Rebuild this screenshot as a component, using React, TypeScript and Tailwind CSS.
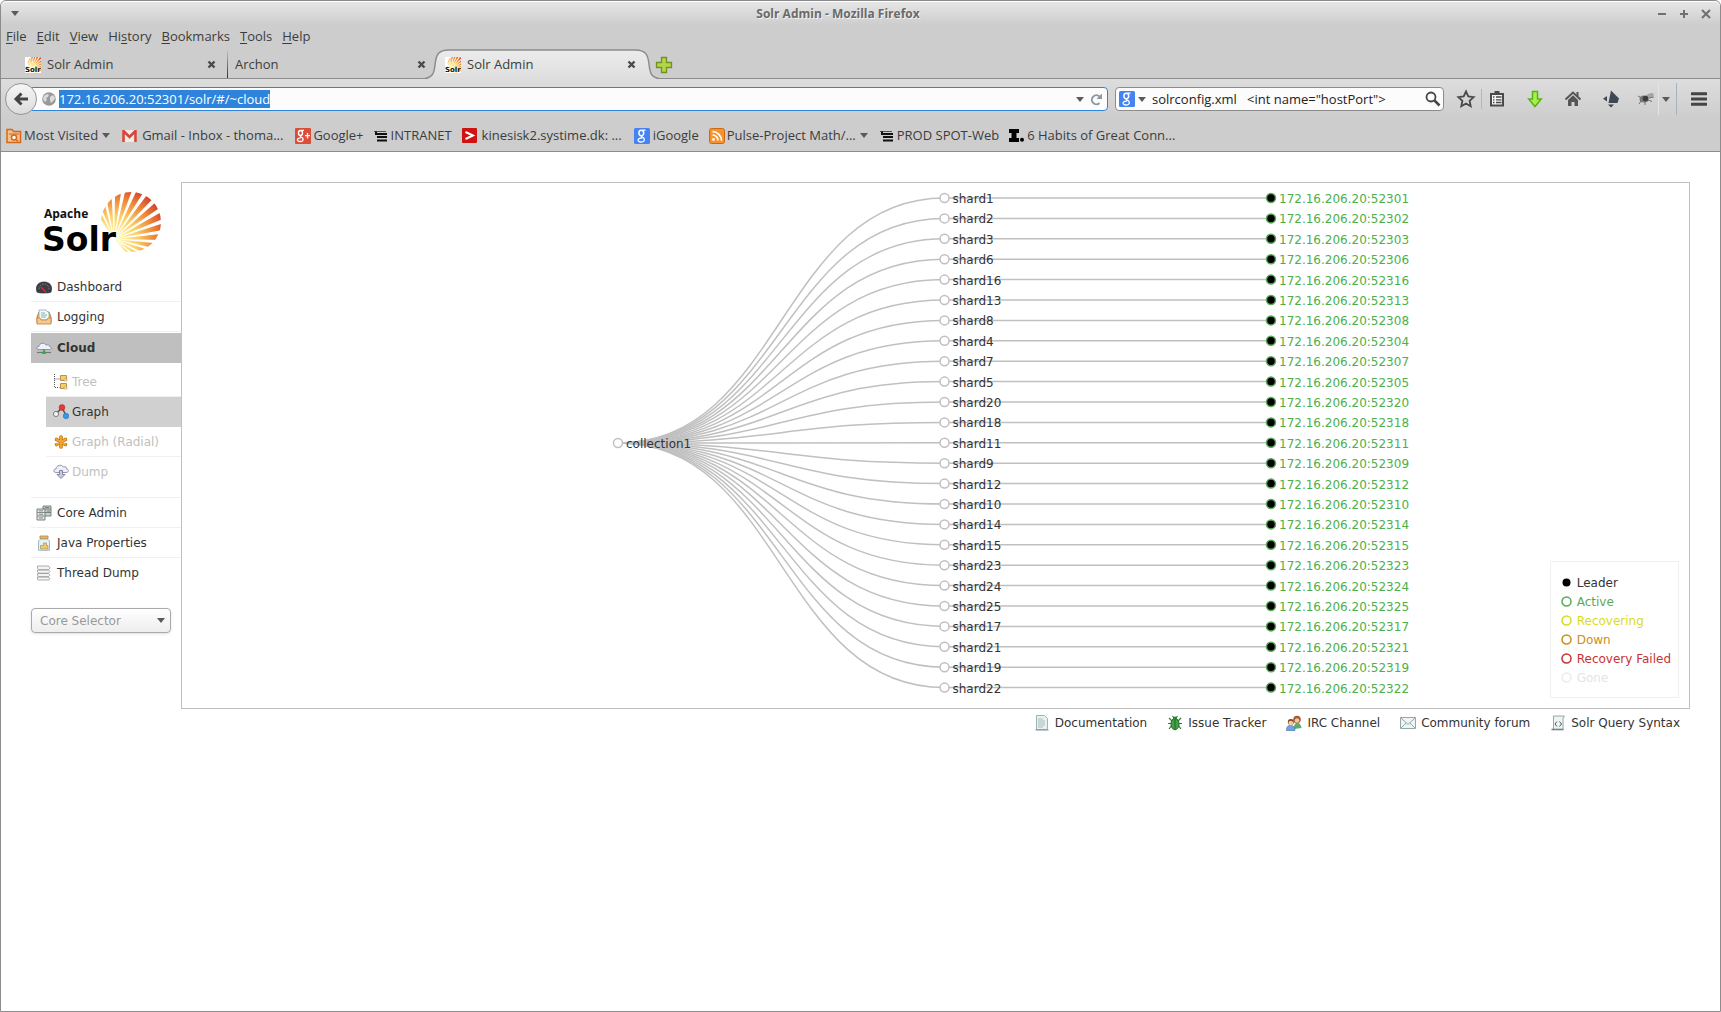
import React, { useEffect, useRef } from "react";

const shards = [1, 2, 3, 6, 16, 13, 8, 4, 7, 5, 20, 18, 11, 9, 12, 10, 14, 15, 23, 24, 25, 17, 21, 19, 22];

function Caret({ className = "" }: { className?: string }) {
  return (
    <svg className={"shrink-0 " + className} width="8" height="5" viewBox="0 0 8 5">
      <path d="M0 0h8L4 5z" fill="#5a5a5a" />
    </svg>
  );
}

function Burst({ x, y, scale = 1 }: { x: number; y: number; scale?: number }) {
  const rays = Array.from({ length: 15 }, (_, i) => {
    const a = ((-124 + i * 11.8) * Math.PI) / 180;
    const b = ((-124 + i * 11.8 + 7.2) * Math.PI) / 180;
    return `M0 0L${70 * Math.cos(a)} ${70 * Math.sin(a)}L${70 * Math.cos(b)} ${70 * Math.sin(b)}z`;
  }).join("");
  return (
    <g transform={`translate(${x} ${y}) scale(${scale})`}>
      <defs>
        <radialGradient id="burst" gradientUnits="userSpaceOnUse" cx="0" cy="0" r="58">
          <stop offset="0.1" stopColor="#fff6b0" />
          <stop offset="0.4" stopColor="#fbd067" />
          <stop offset="0.7" stopColor="#ee8537" />
          <stop offset="1" stopColor="#c9302c" />
        </radialGradient>
        <clipPath id="disc">
          <circle cx="17" cy="-17" r="30" />
        </clipPath>
      </defs>
      <path d={rays} fill="url(#burst)" clipPath="url(#disc)" />
    </g>
  );
}

function SolrLogo() {
  return (
    <svg width="124" height="74" viewBox="0 0 124 74" role="img" aria-label="Apache Solr">
      <Burst x={73} y={49} />
      <text x="3" y="28" fontFamily="Open Sans" fontWeight="700" fontSize="12" fill="#111">Apache</text>
      <text x="1" y="61" fontFamily="DejaVu Sans" fontWeight="700" fontSize="33" fill="#000" stroke="#fff" strokeWidth="2" paintOrder="stroke">Solr</text>
    </svg>
  );
}

function SolrFavicon() {
  return (
    <svg className="shrink-0" width="16" height="16" viewBox="0 0 16 16">
      <rect width="16" height="16" fill="#fff" />
      <Burst x={6} y={12} scale={0.28} />
      <text x="0" y="15" fontFamily="DejaVu Sans" fontWeight="700" fontSize="7" fill="#111">Solr</text>
    </svg>
  );
}

function CloseMark() {
  return (
    <svg width="9" height="9" viewBox="0 0 9 9">
      <path d="M1.5 1.5l6 6M7.5 1.5l-6 6" stroke="#4a4a4a" strokeWidth="2.4" />
    </svg>
  );
}

function GoogleG() {
  return (
    <svg className="shrink-0" width="16" height="16" viewBox="0 0 16 16">
      <rect width="16" height="16" rx="1.5" fill="#4583f3" />
      <ellipse cx="7.300" cy="5" rx="2.400" ry="2.700" fill="none" stroke="#fff" strokeWidth="1.500" />
      <path d="M8.500 2.200h3M8 7.700c-2 1.200 1 1.600 1.900 2.600 1.400 2-.3 3.700-2.600 3.700-2.600 0-3.700-1.300-3-2.600.6-1.100 2-1.400 3.500-1.400" fill="none" stroke="#fff" strokeWidth="1.300" />
    </svg>
  );
}

function SpotIcon() {
  return (
    <svg className="shrink-0" width="14" height="12" viewBox="0 0 14 12">
      <path d="M0 1.5h12" stroke="#555" strokeWidth="1" />
      <path d="M2 1.5v2.5h11M3 7h10M3 10.5h10" stroke="#111" strokeWidth="2" fill="none" />
    </svg>
  );
}

const sideIcons: Record<string, React.ReactNode> = {
  dashboard: (
    <g>
      <path d="M1 13C-1 6 3 3 8 3s9 3 7 10q-1 1-7 1t-7-1z" fill="#3d3d44" stroke="#26262b" strokeWidth=".7" />
      <path d="M3 10a5 5 0 0 1 10 0" fill="none" stroke="#8b8b92" strokeWidth="1" strokeDasharray="1.5 1.3" />
      <path d="M5 8l5 5.500" stroke="#e3263a" strokeWidth="1.3" />
    </g>
  ),
  logging: (
    <g>
      <path d="M1 8l2-5h10l2 5v6H1z" fill="#e9b06b" stroke="#c0803c" />
      <path d="M3 1h7l3 3v7H3z" fill="#f1f8f8" stroke="#8ca9ab" strokeWidth=".8" />
      <path d="M5 4h4M5 6h6M5 8h5" stroke="#8bb1b5" />
      <path d="M1 9h3l1 2h6l1-2h3v6H1z" fill="#f5c98f" stroke="#c0803c" strokeWidth=".8" />
    </g>
  ),
  cloud: (
    <g>
      <path d="M3 9.500C0 9.500 0 6.500 3 6.500c0-3.500 5.500-4.500 7-1.500 2.500-.5 3.500 0 3.500 1.500 2.500 0 2.500 3 0 3z" fill="#f0f0fa" stroke="#8585a6" strokeWidth=".9" />
      <path d="M1 12.500h14" stroke="#777" strokeWidth="1.200" />
      <path d="M8 9.500v3" stroke="#2b9a36" strokeWidth="1.500" />
      <rect x="6" y="11.500" width="4" height="2.500" rx="1" fill="#31ab3f" />
    </g>
  ),
  tree: (
    <g>
      <path d="M1.500 0v13.500h5M1.500 5h5" stroke="#555" strokeDasharray="1 1" fill="none" />
      <path d="M7.500 1.500h6v5h-6zM7.500 9.500h6v5h-6z" fill="#f0ce72" stroke="#b8924a" />
      <path d="M11 5h3v2h-3zM11 13h3v2h-3z" fill="#fff3c4" stroke="#b8924a" strokeWidth=".6" />
    </g>
  ),
  graph: (
    <g>
      <path d="M3 10L9 3.500l4 8" stroke="#555" strokeWidth="1.500" fill="none" />
      <circle cx="9" cy="3.500" r="2.900" fill="#e33b3b" stroke="#a82020" strokeWidth=".5" />
      <circle cx="3" cy="10" r="2.600" fill="#f1f1f1" stroke="#666" strokeWidth=".8" />
      <circle cx="13" cy="12" r="2.800" fill="#3a97e6" stroke="#1d69b1" strokeWidth=".5" />
    </g>
  ),
  radial: (
    <g strokeLinecap="round">
      <path d="M8 3v10M3.500 5.500l9 5M12.500 5.500l-9 5" stroke="#b8720c" strokeWidth="3.600" />
      <path d="M8 3v10M3.500 5.500l9 5M12.500 5.500l-9 5" stroke="#f2a52c" strokeWidth="2.200" />
    </g>
  ),
  dump: (
    <g>
      <path d="M3 8.500C0 8.500 0 5 3 5c0-4 6-5 7.500-2C13 2 14 4 13.500 5c2.500 0 2.500 3.500 0 3.500z" fill="#eeeef9" stroke="#8c8ca8" strokeWidth=".9" />
      <path d="M6.500 6.500h3v4H12l-4 4-4-4h2.500z" fill="#c9c9e0" stroke="#7c7c98" strokeWidth=".9" />
    </g>
  ),
  core: (
    <g>
      <path d="M7 1h8v10H7z" fill="#c9d0c9" stroke="#6f7674" strokeWidth=".9" />
      <path d="M7 4h8M7 7.500h8M9 2.500h4M11 6h3" stroke="#78807c" />
      <path d="M1 4h8v11H1z" fill="#dfe4df" stroke="#6f7674" strokeWidth=".9" />
      <path d="M1 7.500h8M1 11h8M3 5.800h4M3 9.300h4M3 13h4" stroke="#848d88" />
    </g>
  ),
  java: (
    <g>
      <path d="M4 1h8v2.500H4z" fill="#e9b95a" stroke="#bd8728" strokeWidth=".8" />
      <path d="M4.500 4h7l2 2v9.300h-11V6z" fill="#e6f1f7" stroke="#8fb0c2" strokeWidth=".9" />
      <path d="M4.500 10.500h3V8h3v2.500h1.500v3.500H4.500z" fill="#eac77a" stroke="#b98f3f" strokeWidth=".7" />
    </g>
  ),
  thread: (
    <g fill="#f4f4f4" stroke="#999" strokeWidth=".8">
      <path d="M1 12h11l2 1.500-1 1.500H2.500L1 14l1-1zM1.500 8.500h11l1.500 1.700-1.500 1.500H3L1.500 10.500zM1.500 5h11L14 6.700l-1.500 1.500H3L1.500 7zM1.500 1h11L14 3l-1.500 1.700H3L1.500 3.500z" />
    </g>
  ),
  doc: (
    <g>
      <path d="M2.500.5h8l3 3v11h-11z" fill="#eaf1f1" stroke="#9db3b3" />
      <path d="M4 4h5M4 6h7M4 8h7M4 10h7M4 12h5" stroke="#a3bcbc" />
      <path d="M1.500 15h13" stroke="#7d9292" />
    </g>
  ),
  bug: (
    <g>
      <path d="M2 3l3 3M14 3l-3 3M1 8.500h14M2 14l3-4M14 14l-3-4M5.500 1l1.500 2M10.500 1L9 3" stroke="#2e7d32" strokeWidth="1.200" />
      <ellipse cx="8" cy="9" rx="4" ry="5.800" fill="#45a047" stroke="#25692a" />
      <path d="M8 5v9" stroke="#25692a" />
      <circle cx="8" cy="3.500" r="2" fill="#2f8033" />
    </g>
  ),
  people: (
    <g>
      <path d="M8 14c0-5 1-6 3.500-6S15 10 15.500 13z" fill="#56ad72" />
      <circle cx="11" cy="4.500" r="3.800" fill="#a95a33" />
      <circle cx="11" cy="5.500" r="2.300" fill="#f2c79d" />
      <path d="M.5 15.500c0-4 1.500-5 4-5s4.500 1 4.500 5z" fill="#6fa4e0" stroke="#38699f" strokeWidth=".6" />
      <circle cx="4.800" cy="7" r="3" fill="#7b4425" />
      <circle cx="4.800" cy="8" r="2.300" fill="#f6cfa6" />
    </g>
  ),
  mail: (
    <g>
      <path d="M.5 2.500h15v11H.5z" fill="#eef3f3" stroke="#93a8a8" />
      <path d="M1 3l7 6.500L15 3M1 13l5-5M15 13l-5-5" fill="none" stroke="#93a8a8" />
    </g>
  ),
  script: (
    <g>
      <path d="M3.500 1h11l-1.500 2v11.500H3.500z" fill="#eef3f3" stroke="#93a8a8" />
      <path d="M1.500 14.500h12" stroke="#708787" strokeWidth="1.600" />
      <path d="M7 6.500L5 9l2 2.500M9.500 6.500l2 2.500-2 2.500" fill="none" stroke="#555" />
    </g>
  ),
};

function Icon({ name }: { name: string }) {
  return (
    <svg className="shrink-0" width="16" height="16" viewBox="0 0 16 16">
      {sideIcons[name]}
    </svg>
  );
}

const menus: [string, string, string][] = [
  ["", "F", "ile"], ["", "E", "dit"], ["", "V", "iew"], ["Hi", "s", "tory"], ["", "B", "ookmarks"], ["", "T", "ools"], ["", "H", "elp"],
];

const bookmarks: { label: string; icon: React.ReactNode; caret?: boolean; gap: string }[] = [
  {
    label: "Most Visited", caret: true, gap: "mr-3 gap-0.5",
    icon: (
      <svg className="shrink-0" width="16" height="16" viewBox="0 0 16 16">
        <path d="M1 14.500V1.500h5l1.500 2H14.500v11z" fill="#f5c08a" stroke="#d2691e" strokeWidth="1.500" />
        <path d="M3 6h10" stroke="#d2691e" />
        <circle cx="8" cy="9.500" r="2.500" fill="#fff" stroke="#d2691e" strokeWidth="1.500" />
        <path d="M10 11.500l2 2" stroke="#d2691e" strokeWidth="1.500" />
      </svg>
    ),
  },
  {
    label: "Gmail - Inbox - thoma...", gap: "mr-3 gap-[5px]",
    icon: (
      <svg className="shrink-0" width="15" height="12" viewBox="0 0 15 12">
        <path d="M0 0h15v12H0z" fill="#f0eadf" />
        <path d="M1.500 12V1L7.500 7l6-6v11" fill="none" stroke="#d6453d" strokeWidth="2.600" />
      </svg>
    ),
  },
  {
    label: "Google+", gap: "mr-2.5 gap-0.5",
    icon: (
      <svg className="shrink-0" width="16" height="16" viewBox="0 0 16 16">
        <rect width="16" height="16" rx="1" fill="#dd4b39" />
        <ellipse cx="5.500" cy="5" rx="2" ry="2.500" fill="none" stroke="#fff" strokeWidth="1.400" />
        <path d="M6.500 2.400h2.500M6 7.500c-2 1.200 1 1.600 1.700 2.600 1.200 2-.3 3.400-2.400 3.400-2.400 0-3.300-1.200-2.700-2.400.6-1 1.800-1.300 3.200-1.300M12.500 5v5.500M10 7.700h5" fill="none" stroke="#fff" strokeWidth="1.300" />
      </svg>
    ),
  },
  { label: "INTRANET", gap: "mr-2.5 gap-[3px]", icon: <SpotIcon /> },
  {
    label: "kinesisk2.systime.dk: ...", gap: "mr-3 gap-[5px]",
    icon: (
      <svg className="shrink-0" width="15" height="15" viewBox="0 0 15 15">
        <rect width="15" height="15" rx="1" fill="#cf1313" />
        <path d="M3.500 4L11 7.500 3.500 11" fill="none" stroke="#fff" strokeWidth="2" />
      </svg>
    ),
  },
  { label: "iGoogle", gap: "mr-2.5 gap-[3px]", icon: <GoogleG /> },
  {
    label: "Pulse-Project Math/...", caret: true, gap: "mr-3 gap-0.5",
    icon: (
      <svg className="shrink-0" width="16" height="16" viewBox="0 0 16 16">
        <rect x=".5" y=".5" width="15" height="15" rx="2" fill="#f7922f" stroke="#c96a12" />
        <circle cx="4.500" cy="11.500" r="1.400" fill="#fff" />
        <path d="M3.500 7a5.500 5.500 0 0 1 5.500 5.500M3.500 3.700a9 9 0 0 1 9 9" fill="none" stroke="#fff" strokeWidth="1.700" />
      </svg>
    ),
  },
  { label: "PROD SPOT-Web", gap: "mr-2.5 gap-[3px]", icon: <SpotIcon /> },
  {
    label: "6 Habits of Great Conn...", gap: "gap-0.5",
    icon: (
      <svg className="shrink-0" width="16" height="13" viewBox="0 0 16 13">
        <path d="M0 0h10v4H7.500v5H10v4H0V9h2.500V4H0z" fill="#000" />
        <circle cx="13" cy="10.800" r="2" fill="#000" />
      </svg>
    ),
  },
];

const toolbar: { name: string; box: string; icon: React.ReactNode }[] = [
  {
    name: "Bookmark this page", box: "w-[31px] border-r border-[#b4b8bd]",
    icon: <path d="M10 2.500l2.300 5 5.300.6-4 3.700 1.100 5.400L10 14.500l-4.700 2.700 1.100-5.400-4-3.700 5.300-.6z" fill="none" stroke="#4a4a4a" strokeWidth="1.800" />,
  },
  {
    name: "Bookmarks list", box: "w-[30px]",
    icon: (
      <g>
        <path d="M4 5h12v11.500H4z" fill="#f5f5f5" stroke="#4a4a4a" strokeWidth="2" />
        <path d="M7.500 2h5v3h-5z" fill="#4a4a4a" />
        <path d="M6 8h1.500M9 8h5.500M6 10.800h1.500M9 10.800h5.500M6 13.500h1.500M9 13.500h5.500" stroke="#4a4a4a" strokeWidth="1.300" />
      </g>
    ),
  },
  {
    name: "Downloads", box: "w-[45px]",
    icon: <path d="M7.500 2.500h5V10h3.800L10 17.500 3.700 10h3.800z" fill="#a6f04a" stroke="#58b414" strokeWidth="1.500" />,
  },
  {
    name: "Home", box: "w-[31px]",
    icon: (
      <g>
        <path d="M2.500 10.500L10 3.500l7.500 7" fill="none" stroke="#555" strokeWidth="2" />
        <path d="M13.500 3h2v4h-2zM5 11l5-4.800 5 4.800v6h-3.500v-4h-3v4H5z" fill="#555" />
      </g>
    ),
  },
  {
    name: "Navigate", box: "w-[45px]",
    icon: (
      <g fill="#3e4852">
        <path d="M10 1.500l8 8-1.500 4.500H7.500z" />
        <path d="M6 7v5.500L2 9.700zM7 15.500h6L10 18.500z" />
      </g>
    ),
  },
  {
    name: "Fly", box: "w-[25px]",
    icon: (
      <g>
        <ellipse cx="8" cy="10" rx="4.500" ry="3.500" fill="#777" />
        <ellipse cx="14" cy="6.500" rx="4" ry="2" fill="#a6a6a6" transform="rotate(-20 14 6.500)" />
        <circle cx="9.500" cy="9.500" r="2.800" fill="#3c3c3c" />
        <path d="M4 8l-2-1M5 12l-2 3M9 13v3M12 11l4 1.500M13 9l5-1" stroke="#666" strokeWidth=".9" />
      </g>
    ),
  },
];

const legend = [
  ["Leader", "text-[#333333]", "fill-black"],
  ["Active", "text-[#57ab57]", "fill-none stroke-[#57ab57]"],
  ["Recovering", "text-[#d9dc1c]", "fill-none stroke-[#d9dc1c]"],
  ["Down", "text-[#c8901a]", "fill-none stroke-[#c8901a]"],
  ["Recovery Failed", "text-[#c83232]", "fill-none stroke-[#c83232]"],
  ["Gone", "text-[#e4e4e4]", "fill-none stroke-[#ececec]"],
];

function CloudGraph() {
  const rootX = 436, shardX = 762.5, hostX = 1089, rootY = 260;
  const mid = (rootX + shardX) / 2;
  return (
    <svg className="block h-auto w-full" viewBox="0 0 1507 525" fontFamily="DejaVu Sans, sans-serif" fontSize="12">
      {shards.map((n, i) => {
        const y = 15 + i * 20.4;
        return (
          <path key={n} d={`M${rootX} ${rootY}C${mid} ${rootY} ${mid} ${y} ${shardX} ${y}H${hostX}`} fill="none" stroke="#c0c0c0" strokeWidth="1.500" />
        );
      })}
      <circle cx={rootX} cy={rootY} r="4.500" fill="#fff" stroke="#c0c0c0" strokeWidth="1.500" />
      <text x={rootX + 8} y={rootY + 5} fill="#333">collection1</text>
      {shards.map((n, i) => {
        const y = 15 + i * 20.4;
        return (
          <g key={n}>
            <circle cx={shardX} cy={y} r="4.500" fill="#fff" stroke="#c0c0c0" strokeWidth="1.500" />
            <text x={shardX + 8} y={y + 5} fill="#333">shard{n}</text>
            <circle cx={hostX} cy={y} r="4.500" fill="#000" stroke="#57ab57" strokeWidth="1.500" />
            <text x={hostX + 8} y={y + 5} fill="#4daf4a">172.16.206.20:{52300 + n}</text>
          </g>
        );
      })}
    </svg>
  );
}

function Tab({ label, favicon, active }: { label: string; favicon?: boolean; active?: boolean }) {
  return (
    <div className={"flex w-[210px] items-center gap-1.5 pt-0.5 pr-[9px] pl-2 " + (active ? "relative" : "")}>
      {active && (
        <svg className="absolute top-0 -left-3 h-[30px] w-[234px]" viewBox="0 0 234 30">
          <defs>
            <linearGradient id="tab" x1="0" y1="0" x2="0" y2="1">
              <stop offset="0" stopColor="#ececec" />
              <stop offset="1" stopColor="#dedede" />
            </linearGradient>
          </defs>
          <path d="M0 30C8 29 9 24 10 16 11 6 13 1 24 1h186c11 0 13 5 14 14 1 9 2 14 10 15z" fill="url(#tab)" />
          <path d="M0 29.500C8 28 9 24 10 16 11 6 13 1 24 1h186c11 0 13 5 14 14 1 9 2 13 10 14.500" fill="none" stroke="#8c8c8c" strokeWidth="1.500" />
        </svg>
      )}
      {favicon && <span className="relative"><SolrFavicon /></span>}
      <span className="relative grow">{label}</span>
      <button aria-label={"Close " + label} className="relative p-0.5"><CloseMark /></button>
    </div>
  );
}

function NavItem({ icon, label, className = "", sub = false }: { icon: string; label: string; className?: string; sub?: boolean }) {
  return (
    <a href={"#" + icon} className={"flex h-[30px] items-center " + (sub ? "gap-[3px] pl-[7px] " : "gap-[5px] pl-[5px] ") + className}>
      <Icon name={icon} />
      {label}
    </a>
  );
}

export default function App() {
  const url = useRef<HTMLInputElement>(null);
  useEffect(() => {
    url.current?.focus();
    url.current?.select();
  }, []);

  return (
    <div className="flex min-h-screen flex-col rounded-t-md border border-[#8c8c8c] bg-white font-['DejaVu_Sans',sans-serif] text-[12px] text-[#333]">
      <header className="rounded-t-md bg-[#cdcdcd] font-['Open_Sans',sans-serif] text-[13px] text-[#3c3c3c]">
        <div className="flex h-[24px] items-center rounded-t-md border-t border-white bg-linear-to-b from-[#e6e6e6] to-[#cdcdcd] pr-[9px] pl-2.5">
          <Caret />
          <h1 className="grow text-center text-[12px] font-bold text-[#6a6a6a] [text-shadow:1px_1px_0_#f0f0f0]">Solr Admin - Mozilla Firefox</h1>
          <div className="flex items-center gap-3">
            <button aria-label="Minimize"><svg width="10" height="10"><path d="M1 5h8" stroke="#707070" strokeWidth="2" /></svg></button>
            <button aria-label="Maximize"><svg width="10" height="10"><path d="M1 5h8M5 1v8" stroke="#707070" strokeWidth="2" /></svg></button>
            <button aria-label="Close"><svg width="10" height="10"><path d="M1 1l8 8M9 1l-8 8" stroke="#707070" strokeWidth="2" /></svg></button>
          </div>
        </div>
        <nav className="flex h-[24px] items-center gap-2.5 pl-[5px]">
          {menus.map(([a, b, c]) => (
            <button key={b + c}>{a}<span className="underline underline-offset-2">{b}</span>{c}</button>
          ))}
        </nav>
        <div className="flex h-[30px] border-b border-[#8c8c8c] pl-4">
          <Tab label="Solr Admin" favicon />
          <div className="-mr-px w-px bg-linear-to-b from-[#cdcdcd] to-[#333]" />
          <Tab label="Archon" />
          <Tab label="Solr Admin" favicon active />
          <button aria-label="New tab" className="ml-2 pt-0.5">
            <svg width="18" height="18" viewBox="0 0 18 18">
              <path d="M6.500 1.500h5v5h5v5h-5v5h-5v-5h-5v-5h5z" fill="#b4d544" stroke="#6f9326" strokeWidth="1.300" />
            </svg>
          </button>
        </div>
        <div className="flex h-[40px] items-center bg-linear-to-b from-[#dddddd] to-[#cdcdcd] pl-1">
          <button aria-label="Back" className="relative z-10 flex size-8 shrink-0 items-center justify-center rounded-full border border-[#8f959c] bg-linear-to-b from-[#f6f6f6] to-[#dcdcdc]">
            <svg width="16" height="16" viewBox="0 0 16 16">
              <path d="M15 8H4M8.500 2.500L3 8l5.500 5.500" fill="none" stroke="#444" strokeWidth="3" />
            </svg>
          </button>
          <div className="-ml-2 flex h-6 grow items-center rounded-sm border border-[#2f85de] bg-[#fcfcfc] pr-1 pl-3">
            <svg className="mr-[3px] shrink-0" width="14" height="14" viewBox="0 0 14 14">
              <circle cx="7" cy="7" r="6.800" fill="#9a9a9a" />
              <path d="M2 4l3-2 2 1-1 2-2 1 1 2-2 2-2-3zM8 5l3-2 2 3-1 2-3 3-1-3z" fill="#dcdcdc" />
            </svg>
            <input ref={url} aria-label="Address" defaultValue="172.16.206.20:52301/solr/#/~cloud" className="h-5 min-w-0 grow bg-transparent outline-none selection:bg-[#2e83dc] selection:text-white" />
            <Caret className="mr-1.5" />
            <button aria-label="Reload">
              <svg width="13" height="13" viewBox="0 0 13 13">
                <path d="M9.500 10A4.500 4.500 0 1 1 9.500 3.500" fill="none" stroke="#8c98a4" strokeWidth="2" />
                <path d="M12 .5V6H6.500z" fill="#8c98a4" />
              </svg>
            </button>
          </div>
          <div className="ml-[7px] flex h-6 w-[329px] items-center rounded-sm border border-[#8c8c8c] bg-[#fcfcfc] pr-0.5 pl-[3px] text-[#222]">
            <GoogleG />
            <Caret className="mr-1.5 ml-[3px]" />
            <input aria-label="Search" defaultValue={'solrconfig.xml   <int name="hostPort">'} className="h-5 min-w-0 grow bg-transparent outline-none" />
            <svg width="16" height="16" viewBox="0 0 16 16">
              <circle cx="6" cy="6" r="4.500" fill="none" stroke="#444" strokeWidth="1.800" />
              <path d="M9.500 9.500l5 5" stroke="#444" strokeWidth="2.500" />
            </svg>
          </div>
          <div className="ml-[7px] flex items-center">
            {toolbar.map((t) => (
              <button key={t.name} aria-label={t.name} className={"flex h-5 items-center justify-center " + t.box}>
                <svg className="shrink-0" width="20" height="20" viewBox="0 0 20 20">{t.icon}</svg>
              </button>
            ))}
            <div className="flex h-8 w-[19px] items-center border-r border-l border-r-[#a9b2bb] border-l-[#e4e4e4] pl-[3px]"><Caret /></div>
            <button aria-label="Menu" className="mr-[13px] ml-[14px]">
              <svg width="16" height="14" viewBox="0 0 16 14">
                <path d="M1 1.800h14M1 7h14M1 12.200h14" stroke="#444" strokeWidth="3" strokeLinecap="round" />
              </svg>
            </button>
          </div>
        </div>
        <nav className="flex h-[33px] items-center border-b border-[#8c8c8c] pt-px pl-[5px] whitespace-nowrap">
          {bookmarks.map((b) => (
            <a key={b.label} href="#bookmark" className={"flex items-center " + b.gap}>
              {b.icon}
              {b.label}
              {b.caret && <Caret className="ml-0.5" />}
            </a>
          ))}
        </nav>
      </header>

      <main className="pt-[30px] pr-[30px] pl-[30px]">
        <div className="flex items-stretch">
          <aside className="w-[150px] shrink-0">
            <a href="#home" className="mt-2 mb-2 ml-2.5 block h-[74px]"><SolrLogo /></a>
            <nav>
              <NavItem icon="dashboard" label="Dashboard" className="border-b border-[#f0f0f0]" />
              <NavItem icon="logging" label="Logging" className="border-b border-[#f0f0f0]" />
              <NavItem icon="cloud" label="Cloud" className="mt-px bg-[#bfbfbf] font-bold" />
              <div className="mt-1 mb-[10px] ml-[15px] text-[#c0c0c0]">
                <NavItem sub icon="tree" label="Tree" className="border-b border-[#f0f0f0]" />
                <NavItem sub icon="graph" label="Graph" className="bg-[#d0d0d0] text-[#333]" />
                <NavItem sub icon="radial" label="Graph (Radial)" className="border-b border-[#f0f0f0]" />
                <NavItem sub icon="dump" label="Dump" />
              </div>
              <NavItem icon="core" label="Core Admin" className="border-t border-[#f0f0f0]" />
              <NavItem icon="java" label="Java Properties" className="border-t border-[#f0f0f0]" />
              <NavItem icon="thread" label="Thread Dump" className="border-t border-[#f0f0f0]" />
            </nav>
            <div className="relative mt-[21px] w-[140px]">
              <select aria-label="Core Selector" className="h-[25px] w-full appearance-none rounded border border-[#aaaaaa] bg-linear-to-b from-white via-[#f6f6f6] to-[#eeeeee] pl-2 text-[#999999] shadow-sm">
                <option>Core Selector</option>
              </select>
              <Caret className="pointer-events-none absolute top-[10px] right-1.5" />
            </div>
          </aside>
          <section className="relative min-w-0 grow border border-[#c0c0c0]">
            <CloudGraph />
            <ul className="absolute right-2.5 bottom-2.5 border border-[#f0f0f0] bg-white pt-[11px] pr-[7px] pb-2.5 pl-2.5">
              {legend.map(([label, text, dot]) => (
                <li key={label} className={"flex h-[19px] items-center gap-[5px] " + text}>
                  <svg width="11" height="11" viewBox="0 0 11 11">
                    <circle cx="5.500" cy="5.500" r={label === "Leader" ? 4 : 4.5} className={dot} strokeWidth="1.500" />
                  </svg>
                  {label}
                </li>
              ))}
            </ul>
          </section>
        </div>
        <footer className="flex justify-end gap-5 pt-[5px] pr-2.5">
          {[["doc", "Documentation"], ["bug", "Issue Tracker"], ["people", "IRC Channel"], ["mail", "Community forum"], ["script", "Solr Query Syntax"]].map(([icon, label]) => (
            <a key={label} href={"#" + icon} className="flex items-center gap-[5px]"><Icon name={icon} />{label}</a>
          ))}
        </footer>
      </main>
    </div>
  );
}
